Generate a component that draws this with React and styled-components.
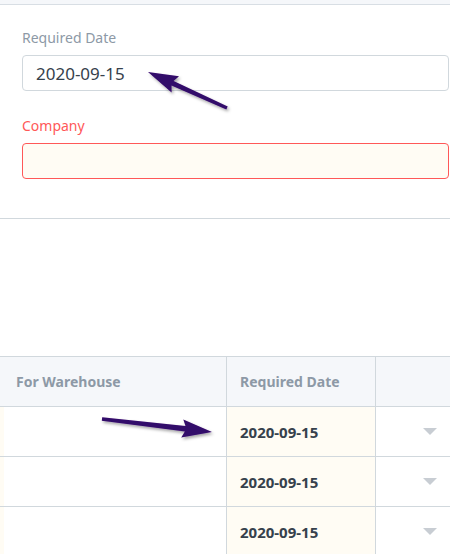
import React from "react";
import styled, { createGlobalStyle } from "styled-components";

const GlobalStyle = createGlobalStyle`
  html, body { margin: 0; padding: 0; background: #ffffff; }
  body { font-family: "Noto Sans", "Open Sans", sans-serif; overflow: hidden; }
  * { box-sizing: border-box; }
`;

const Page = styled.div`
  position: relative;
  width: 450px;
  height: 554px;
  overflow: hidden;
  background: #fff;
`;

const TopStrip = styled.div`
  height: 5px;
  background: #f5f7fa;
  border-bottom: 1px solid #d8dee4;
`;

const FormSection = styled.section`
  display: flex;
  flex-direction: column;
  padding: 23px 1px 39px 22px;
  border-bottom: 1px solid #d1d8dd;
`;

const Field = styled.div`
  display: flex;
  flex-direction: column;
  gap: 7px;
  & + & { margin-top: 25px; }
`;

const Label = styled.label`
  font-size: 14px;
  line-height: 20px;
  color: ${(p) => (p.$error ? "#ff5858" : "#8d99a6")};
`;

const Input = styled.div`
  height: 36px;
  border: 1px solid ${(p) => (p.$error ? "#ff5858" : "#d1d8dd")};
  background: ${(p) => (p.$error ? "#fffcf4" : "#ffffff")};
  border-radius: 4px;
  display: flex;
  align-items: center;
  padding-left: 13px;
  font-size: 17px;
  color: #36414c;
`;

const Spacer = styled.div`
  height: 137px;
`;

const Grid = styled.div`
  display: grid;
  grid-template-columns: 4px 223px 149px 1fr;
  border-top: 1px solid #d1d8dd;
`;

const Cell = styled.div`
  height: 50px;
  border-right: 1px solid #d1d8dd;
  border-bottom: 1px solid #d1d8dd;
  display: flex;
  align-items: center;
  padding: 0 12px 0 13px;
  background: ${(p) => p.$bg || "#ffffff"};
  &:nth-child(4n) { border-right: none; }
`;

const HeadCell = styled(Cell)`
  background: #f5f7fa;
  font-size: 14px;
  font-weight: 700;
  color: #8d99a6;
  padding-left: ${(p) => p.$pl || "13px"};
`;

const DateText = styled.span`
  font-size: 15px;
  font-weight: 700;
  color: #36414c;
`;

const CaretCell = styled(Cell)`
  justify-content: flex-end;
  padding-right: 13px;
`;

const Caret = styled.span`
  width: 0;
  height: 0;
  border-left: 7px solid transparent;
  border-right: 7px solid transparent;
  border-top: 7px solid #c8cdd3;
`;

const Overlay = styled.svg`
  position: absolute;
  left: 0;
  top: 0;
  pointer-events: none;
`;

function arrowPath(tail, tip, headLen, headHalf, shaftBase, shaftTail) {
  const dx = tip[0] - tail[0];
  const dy = tip[1] - tail[1];
  const len = Math.hypot(dx, dy);
  const ux = dx / len, uy = dy / len;
  const px = -uy, py = ux;
  const bx = tip[0] - ux * headLen, by = tip[1] - uy * headLen;
  const pts = [
    [tail[0] + px * shaftTail, tail[1] + py * shaftTail],
    [bx + ux * 3 + px * shaftBase, by + uy * 3 + py * shaftBase],
    [bx + px * headHalf, by + py * headHalf],
    tip,
    [bx - px * headHalf, by - py * headHalf],
    [bx + ux * 3 - px * shaftBase, by + uy * 3 - py * shaftBase],
    [tail[0] - px * shaftTail, tail[1] - py * shaftTail],
  ];
  return "M" + pts.map((p) => p[0].toFixed(1) + " " + p[1].toFixed(1)).join(" L") + " Z";
}

const rows = [0, 1, 2];

export default function App() {
  return (
    <Page>
      <GlobalStyle />
      <TopStrip />
      <FormSection>
        <Field>
          <Label>Required Date</Label>
          <Input>2020-09-15</Input>
        </Field>
        <Field>
          <Label $error>Company</Label>
          <Input $error />
        </Field>
      </FormSection>
      <Spacer />
      <Grid>
        <HeadCell $pl="0" />
        <HeadCell $pl="12px">For Warehouse</HeadCell>
        <HeadCell>Required Date</HeadCell>
        <HeadCell />
        {rows.map((r) => (
          <React.Fragment key={r}>
            <Cell $bg="#fffcf4" />
            <Cell />
            <Cell $bg="#fffcf4">
              <DateText>2020-09-15</DateText>
            </Cell>
            <CaretCell>
              <Caret />
            </CaretCell>
          </React.Fragment>
        ))}
      </Grid>
      <Overlay width="450" height="554" viewBox="0 0 450 554">
        <defs>
          <filter id="sh" x="-20%" y="-50%" width="140%" height="200%">
            <feDropShadow dx="1.5" dy="2" stdDeviation="1.5" floodColor="#000" floodOpacity="0.35" />
          </filter>
        </defs>
        <path
          d={arrowPath([227, 108], [148, 72], 30, 9, 2.5, 1.8)}
          fill="#33086a"
          filter="url(#sh)"
        />
        <path
          d={arrowPath([102, 419], [212, 432], 30, 9, 2.7, 1.8)}
          fill="#33086a"
          filter="url(#sh)"
        />
      </Overlay>
    </Page>
  );
}
